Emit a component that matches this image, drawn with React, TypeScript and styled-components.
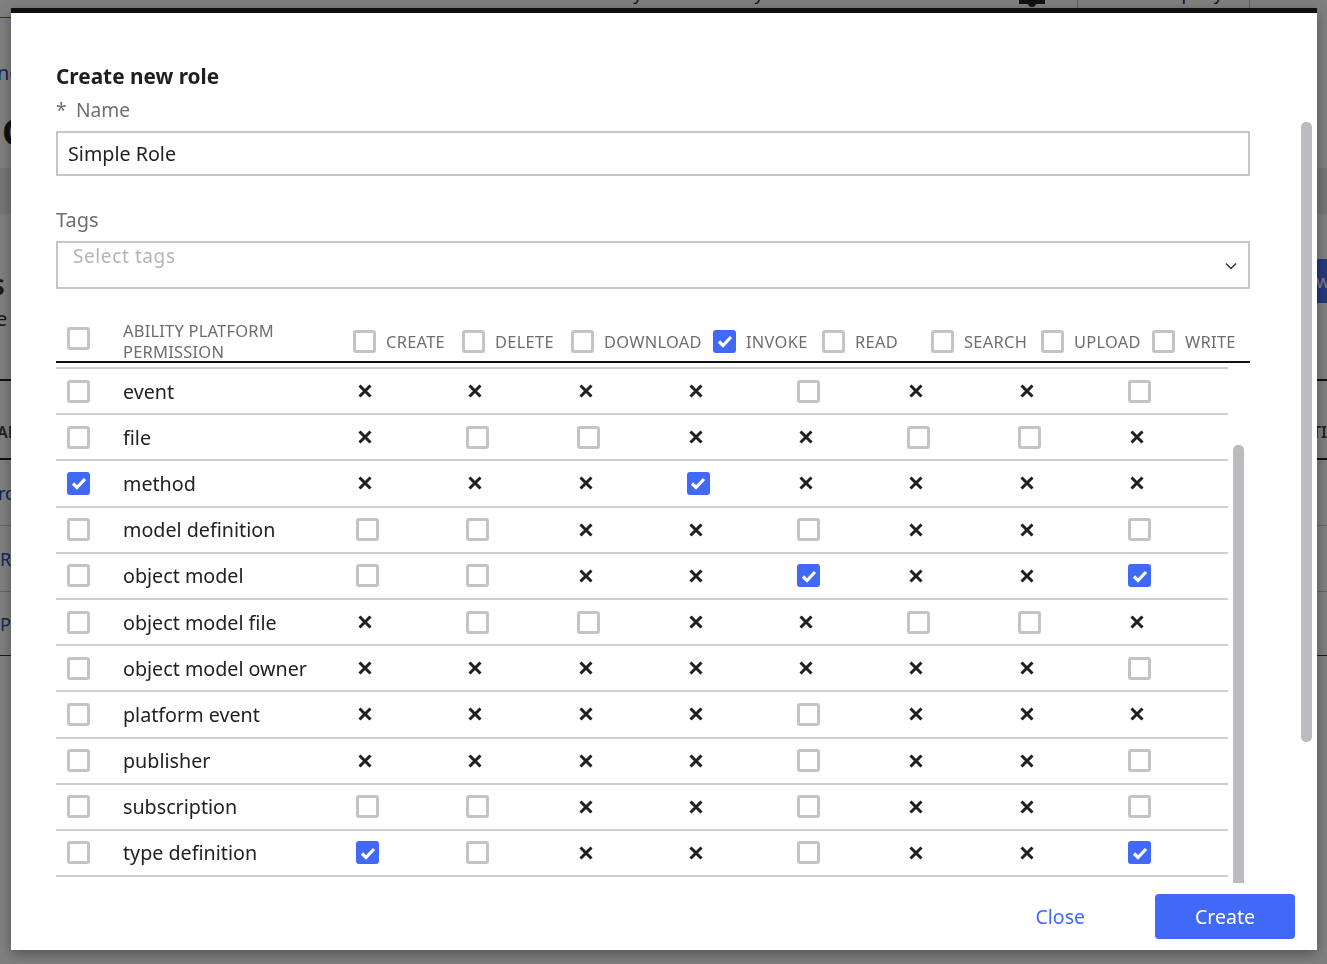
import React from "react";
import styled, { createGlobalStyle } from "styled-components";

const Global = createGlobalStyle`
  html, body { margin: 0; height: 100%; overflow: hidden; background: #fff; }
  body { font-family: "Noto Sans", "Liberation Sans", sans-serif; color: #1f1f1f; }
  #root { height: 100%; }
  * { box-sizing: border-box; }
`;

const BLUE = "#4069f8";

/* background page */
const Page = styled.div`
  height: 964px;
  overflow: hidden;
  display: flex;
  flex-direction: column;
`;
const TopBar = styled.div`
  height: 18px;
  display: flex;
  align-items: flex-start;
  background: #fff;
  overflow: hidden;
`;
const TopTab = styled.div`
  width: 11px;
  border-bottom: 2px solid ${BLUE};
  height: 19px;
  flex: none;
`;
const TopNav = styled.div`
  flex: 1;
  display: flex;
  margin-top: -19px;
  padding-left: 79px;
  gap: 56px;
  font-size: 18px;
  line-height: 24px;
  color: #222;
  white-space: nowrap;
`;
const Bell = styled.div`
  width: 26px;
  height: 4px;
  margin-right: 32px;
  background: #222;
  position: relative;
  flex: none;
  &::after {
    content: "";
    position: absolute;
    left: 9px;
    top: 3px;
    width: 8px;
    height: 4px;
    border-radius: 0 0 4px 4px;
    background: #222;
  }
`;
const TopCell = styled.div`
  width: 173px;
  height: 18px;
  flex: none;
  border-left: 1px solid #bbb;
  border-right: 1px solid #bbb;
  margin-right: 77px;
  margin-top: 0;
  text-align: right;
  padding-right: 26px;
  font-size: 18px;
  line-height: 24px;
  color: #222;
`;
const CellText = styled.div`
  margin-top: -19px;
`;
const Crumb = styled.div`
  height: 92px;
  padding-top: 43px;
  font-size: 20px;
  line-height: 24px;
  color: #2a4bb5;
  margin-left: -3px;
`;
const Heading = styled.div`
  height: 58px;
  font-size: 36px;
  line-height: 44px;
  font-weight: 700;
  margin-left: 2px;
  color: #222;
`;
const Band = styled.div`
  height: 46px;
  background: #ebebeb;
`;
const Section = styled.div`
  height: 167px;
  display: flex;
  flex-direction: column;
  position: relative;
  border-bottom: 2px solid #222;
`;
const SectionTitle = styled.div`
  padding-top: 52px;
  font-size: 28px;
  line-height: 36px;
  font-weight: 600;
  margin-left: -9px;
  color: #333;
`;
const SectionSub = styled.div`
  padding-top: 4px;
  font-size: 20px;
  line-height: 26px;
  margin-left: -4px;
  color: #333;
`;
const NewBtn = styled.div`
  position: absolute;
  right: 0;
  top: 45px;
  width: 30px;
  height: 44px;
  background: #4a6ff5;
  color: #fff;
  font-size: 18px;
  line-height: 44px;
  padding-left: 19px;
  overflow: hidden;
`;
const BgHeader = styled.div`
  height: 79px;
  display: flex;
  justify-content: space-between;
  padding-top: 40px;
  font-size: 16px;
  line-height: 22px;
  color: #444;
  font-weight: 600;
  border-bottom: 2px solid #222;
`;
const BgRow = styled.div<{ $strong?: boolean }>`
  height: ${(p) => (p.$strong ? 64 : 66)}px;
  display: flex;
  align-items: center;
  font-size: 18px;
  color: #2a4bb5;
  border-bottom: 1px solid ${(p) => (p.$strong ? "#333" : "#ccc")};
`;
const Clip = styled.span<{ $off: number }>`
  margin-left: ${(p) => p.$off}px;
  white-space: nowrap;
`;

/* modal */
const Overlay = styled.div`
  position: fixed;
  inset: 0;
  background: rgba(0, 0, 0, 0.5);
  display: flex;
  padding: 8px 10px 14px 11px;
`;
const Modal = styled.div`
  flex: 1;
  position: relative;
  background: #fff;
  border-top: 5px solid #0f0f0f;
  box-shadow: 0 4px 12px rgba(0, 0, 0, 0.35);
  padding: 0 67px 0 45px;
  display: flex;
  flex-direction: column;
`;
const Title = styled.h2`
  margin: 48px 0 0;
  font-size: 20.8px;
  line-height: 30px;
  font-weight: 700;
  color: #1f1f1f;
`;
const FieldLabel = styled.div`
  font-size: 19.2px;
  line-height: 26px;
  color: #6e6e6e;
  display: flex;
`;
const NameLabel = styled(FieldLabel)`
  margin-top: 6px;
  height: 24px;
`;
const Star = styled.span`
  width: 20px;
`;
const TagsLabel = styled(FieldLabel)`
  margin-top: 31px;
  height: 34px;
  font-size: 20px;
`;
const TextInput = styled.div`
  height: 45px;
  margin-top: 10px;
  border: 2px solid #c6c6c6;
  padding: 0 10px;
  font-size: 19.7px;
  line-height: 41px;
  color: #1f1f1f;
`;
const SelectBox = styled.div`
  height: 48px;
  border: 2px solid #c6c6c6;
  padding: 0 10px 0 15px;
  font-size: 19px;
  letter-spacing: 0.6px;
  line-height: 26px;
  color: #b4b4b4;
  display: flex;
  justify-content: space-between;
`;
const Chevron = styled.svg`
  width: 14px;
  height: 10px;
  margin-top: 18px;
`;
const HeaderRow = styled.div`
  margin-top: 31px;
  height: 43px;
  display: grid;
  grid-template-columns: 67px 230px 109px 109px 142px 109px 109px 110px 111px 1fr;
  align-items: center;
  border-bottom: 2px solid #111;
`;
const HeadFirst = styled.div`
  padding-left: 11px;
`;
const HeadTitle = styled.div`
  font-size: 16.5px;
  line-height: 21px;
  color: #6e6e6e;
  letter-spacing: 0.2px;
`;
const HeadCell = styled.div`
  display: flex;
  align-items: center;
  gap: 10px;
  font-size: 16.4px;
  color: #6e6e6e;
  letter-spacing: 0.3px;
`;
const BodyWrap = styled.div`
  position: relative;
  margin-top: 4px;
  height: 516px;
  overflow: hidden;
`;
const Body = styled.div`
  width: 1172px;
  border-top: 2px solid #cfcfcf;
`;
const Row = styled.div`
  height: 46.2px;
  display: grid;
  grid-template-columns: 67px 233px repeat(7, 110.3px) 1fr;
  align-items: center;
  border-bottom: 2px solid #cfcfcf;
`;
const NameCell = styled.div`
  font-size: 19.7px;
  color: #222;
`;
const Cell = styled.div`
  display: flex;
  align-items: center;
`;
const FirstCell = styled(Cell)`
  padding-left: 11px;
`;
const Box = styled.span<{ $on?: boolean }>`
  width: 23px;
  height: 23px;
  border-radius: 3px;
  flex: none;
  display: inline-flex;
  align-items: center;
  justify-content: center;
  border: 3px solid ${(p) => (p.$on ? BLUE : "#c4c4c4")};
  background: ${(p) => (p.$on ? BLUE : "#fff")};
`;
const Cross = styled.svg`
  width: 14px;
  height: 14px;
  margin-left: 2px;
`;
const Thumb = styled.div`
  position: absolute;
  background: #bcbbc0;
`;
const InnerThumb = styled(Thumb)`
  right: 6px;
  top: 78px;
  bottom: 0;
  width: 11px;
  border-radius: 5px 5px 0 0;
`;
const OuterThumb = styled(Thumb)`
  left: 1290px;
  top: 109px;
  width: 11px;
  height: 620px;
  border-radius: 5px;
`;
const Footer = styled.div`
  margin: 11px -45px 0 0;
  display: flex;
  justify-content: flex-end;
  align-items: center;
  gap: 70px;
`;
const CloseBtn = styled.button`
  border: 0;
  background: none;
  padding: 0;
  font: inherit;
  font-size: 19.5px;
  color: ${BLUE};
`;
const CreateBtn = styled.button`
  width: 140px;
  height: 45px;
  border: 0;
  border-radius: 4px;
  background: ${BLUE};
  font: inherit;
  font-size: 19.5px;
  color: #fff;
`;

const Check = ({ on }: { on?: boolean }) => (
  <Box $on={on}>
    {on && (
      <svg width="16" height="14" viewBox="0 0 16 14">
        <path d="M2 7.5 6 11.5 14 3" fill="none" stroke="#fff" strokeWidth="3.2" />
      </svg>
    )}
  </Box>
);
const X = () => (
  <Cross viewBox="0 0 14 14">
    <path d="M1.5 1.5 12.5 12.5M12.5 1.5 1.5 12.5" stroke="#1f1f1f" strokeWidth="3" />
  </Cross>
);

type V = "x" | "o" | "c";
const rows: { name: string; on?: boolean; v: V[] }[] = [
  { name: "event", v: ["x", "x", "x", "x", "o", "x", "x", "o"] },
  { name: "file", v: ["x", "o", "o", "x", "x", "o", "o", "x"] },
  { name: "method", on: true, v: ["x", "x", "x", "c", "x", "x", "x", "x"] },
  { name: "model definition", v: ["o", "o", "x", "x", "o", "x", "x", "o"] },
  { name: "object model", v: ["o", "o", "x", "x", "c", "x", "x", "c"] },
  { name: "object model file", v: ["x", "o", "o", "x", "x", "o", "o", "x"] },
  { name: "object model owner", v: ["x", "x", "x", "x", "x", "x", "x", "o"] },
  { name: "platform event", v: ["x", "x", "x", "x", "o", "x", "x", "x"] },
  { name: "publisher", v: ["x", "x", "x", "x", "o", "x", "x", "o"] },
  { name: "subscription", v: ["o", "o", "x", "x", "o", "x", "x", "o"] },
  { name: "type definition", v: ["c", "o", "x", "x", "o", "x", "x", "c"] },
];
const heads: [string, boolean][] = [
  ["CREATE", false],
  ["DELETE", false],
  ["DOWNLOAD", false],
  ["INVOKE", true],
  ["READ", false],
  ["SEARCH", false],
  ["UPLOAD", false],
  ["WRITE", false],
];
const navItems = ["Dashboard", "Instances", "Model Definitions", "Activity", "Identity"];

export default function App() {
  return (
    <>
      <Global />
      <Page>
        <TopBar>
          <TopTab />
          <TopNav>
            {navItems.map((n) => (
              <span key={n}>{n}</span>
            ))}
          </TopNav>
          <Bell />
          <TopCell>
            <CellText>Company</CellText>
          </TopCell>
        </TopBar>
        <Crumb>ne</Crumb>
        <Heading>Co</Heading>
        <Band />
        <Section>
          <SectionTitle>s</SectionTitle>
          <SectionSub>e</SectionSub>
          <NewBtn>w</NewBtn>
        </Section>
        <BgHeader>
          <Clip $off={-3}>AN</Clip>
          <span>TI</span>
        </BgHeader>
        <BgRow>
          <Clip $off={-2}>ro</Clip>
        </BgRow>
        <BgRow>
          <Clip $off={0}>Ro</Clip>
        </BgRow>
        <BgRow $strong>
          <Clip $off={0}>Pe</Clip>
        </BgRow>
      </Page>
      <Overlay>
        <Modal>
          <Title>Create new role</Title>
          <NameLabel>
            <Star>*</Star>Name
          </NameLabel>
          <TextInput>Simple Role</TextInput>
          <TagsLabel>Tags</TagsLabel>
          <SelectBox>
            Select tags
            <Chevron viewBox="0 0 14 10">
              <path d="M2 2.5 7 7.5 12 2.5" fill="none" stroke="#333" strokeWidth="1.5" />
            </Chevron>
          </SelectBox>
          <HeaderRow>
            <HeadFirst>
              <Check />
            </HeadFirst>
            <HeadTitle>
              ABILITY PLATFORM
              <br />
              PERMISSION
            </HeadTitle>
            {heads.map(([h, on]) => (
              <HeadCell key={h}>
                <Check on={on} />
                {h}
              </HeadCell>
            ))}
          </HeaderRow>
          <BodyWrap>
            <Body>
              {rows.map((r) => (
                <Row key={r.name}>
                  <FirstCell>
                    <Check on={r.on} />
                  </FirstCell>
                  <NameCell>{r.name}</NameCell>
                  {r.v.map((v, i) => (
                    <Cell key={i}>{v === "x" ? <X /> : <Check on={v === "c"} />}</Cell>
                  ))}
                </Row>
              ))}
            </Body>
            <InnerThumb />
          </BodyWrap>
          <Footer>
            <CloseBtn>Close</CloseBtn>
            <CreateBtn>Create</CreateBtn>
          </Footer>
          <OuterThumb />
        </Modal>
      </Overlay>
    </>
  );
}
